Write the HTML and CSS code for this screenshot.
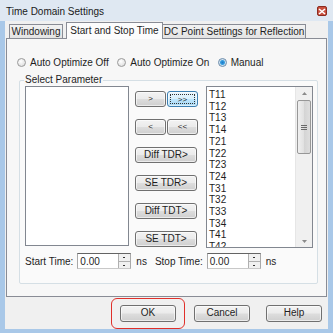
FILE: index.html
```html
<!DOCTYPE html>
<html lang="en">
<head>
  <meta charset="UTF-8" />
  <title>Time Domain Settings</title>
  <link rel="stylesheet" href="styles.css">
</head>
<body>

<div class="window">
  <div class="titlebar">
    <span class="title">Time Domain Settings</span>
    <span class="close">
      <svg width="8" height="7" viewBox="0 0 8 7"><path d="M1 1 L7 6 M7 1 L1 6" stroke="#fff" stroke-width="1.6"/></svg>
    </span>
  </div>

  <div class="client">
    <div class="tabs">
      <div class="tab t-win">Windowing</div>
      <div class="tab active">Start and Stop Time</div>
      <div class="tab t-dc">DC Point Settings for Reflection</div>
    </div>

    <div class="panel">
      <div class="radios">
        <label class="radio"><span class="dot"></span>Auto Optimize Off</label>
        <label class="radio"><span class="dot"></span>Auto Optimize On</label>
        <label class="radio"><span class="dot checked"></span>Manual</label>
      </div>

      <div class="group">
        <span class="legend">Select Parameter</span>
        <div class="lists">
          <div class="listbox source"></div>

          <div class="movers">
            <div class="pair">
              <button class="btn small">&gt;</button>
              <button class="btn small focus"><span>&gt;&gt;</span></button>
            </div>
            <div class="pair">
              <button class="btn small">&lt;</button>
              <button class="btn small">&lt;&lt;</button>
            </div>
            <button class="btn wide">Diff TDR&gt;</button>
            <button class="btn wide">SE TDR&gt;</button>
            <button class="btn wide">Diff TDT&gt;</button>
            <button class="btn wide">SE TDT&gt;</button>
          </div>

          <div class="listbox target">
            <ul class="items">
              <li>T11</li><li>T12</li><li>T13</li><li>T14</li>
              <li>T21</li><li>T22</li><li>T23</li><li>T24</li>
              <li>T31</li><li>T32</li><li>T33</li><li>T34</li>
              <li>T41</li><li>T42</li>
            </ul>
            <div class="scrollbar">
              <div class="arrow">
                <svg width="5" height="3" viewBox="0 0 5 3"><path d="M0 3 L2.5 0 L5 3 Z" fill="#8a8a8a"/></svg>
              </div>
              <div class="track">
                <div class="thumb"><span class="grip"></span></div>
              </div>
              <div class="arrow">
                <svg width="5" height="3" viewBox="0 0 5 3"><path d="M0 0 L2.5 3 L5 0 Z" fill="#8a8a8a"/></svg>
              </div>
            </div>
          </div>
        </div>

        <div class="times">
          <span class="label">Start Time:</span>
          <div class="spin">
            <span class="value">0.00</span>
            <span class="spin-btns"><i class="up"></i><i class="down"></i></span>
          </div>
          <span class="unit">ns</span>
          <span class="label stop">Stop Time:</span>
          <div class="spin">
            <span class="value">0.00</span>
            <span class="spin-btns"><i class="up"></i><i class="down"></i></span>
          </div>
          <span class="unit">ns</span>
        </div>
      </div>
    </div>

    <div class="footer">
      <div class="highlight">
        <button class="btn action">OK</button>
      </div>
      <button class="btn action">Cancel</button>
      <button class="btn action">Help</button>
    </div>
  </div>
</div>

</body>
</html>
```

FILE: styles.css
```css
* {
  box-sizing: border-box;
}
body {
  margin: 0;
  font-family: 'Liberation Sans', Tahoma, sans-serif;
  font-size: 10px;
  color: #1e1e1e;
  background: #a9c8e8;
  white-space: nowrap;
}
.window {
  width: 333px;
  height: 333px;
  display: flex;
  flex-direction: column;
  background: #a9c8e8;
  border-bottom: 4px solid #a9c8e8;
}
.titlebar {
  height: 21px;
  flex: none;
  display: flex;
  align-items: center;
  justify-content: space-between;
  padding: 1px 6px 0 6px;
  background: #dfe8f2;
}
.title {
  color: #1a1a1a;
}
.close {
  width: 10px;
  height: 10px;
  border-radius: 2px;
  background: #c9503f;
  border: 1px solid #8b2b20;
  display: flex;
  align-items: center;
  justify-content: center;
}
.client {
  flex: 1;
  margin: 0 5px;
  background: #f0f0f0;
  display: flex;
  flex-direction: column;
  padding: 0 1px;
}
.tabs {
  height: 17px;
  flex: none;
  display: flex;
  align-items: flex-end;
  padding-left: 3px;
}
.tab {
  height: 14px;
  border: 1px solid #898c95;
  border-bottom: none;
  margin-right: -1px;
  background: linear-gradient(#f2f2f2, #e3e3e3);
  display: flex;
  align-items: center;
  justify-content: center;
  line-height: 1;
}
.t-win {
  width: 54px;
  margin-right: 3px;
}
.t-dc {
  width: 144px;
}
.tab.active {
  width: 97px;
  height: 17px;
  background: #fcfcfc;
  position: relative;
  z-index: 1;
  margin-bottom: -1px;
  padding-bottom: 1px;
}
.panel {
  height: 259px;
  flex: none;
  border: 1px solid #898c95;
  background: #f7f7f7;
  padding: 17px 8px 12px 10px;
  display: flex;
  flex-direction: column;
}
.radios {
  display: flex;
  height: 12px;
  align-items: center;
}
.radio {
  display: flex;
  align-items: center;
  gap: 4px;
  width: 105px;
}
.dot {
  width: 9px;
  height: 9px;
  border-radius: 50%;
  border: 1px solid #9a9a9a;
  background: radial-gradient(circle at 40% 35%, #ffffff, #d6d6d6);
}
.dot.checked {
  background: radial-gradient(circle, #1f78c8 0, #38a0e0 2px, #cfe3f3 3px, #e8e8e8 4px);
  border-color: #6a8bab;
}
.group {
  margin: 12px 0 0 2px;
  flex: 1;
  border: 1px solid #d5dfe5;
  border-radius: 2px;
  background: #fafafa;
  padding: 5px 0 0 5px;
  display: flex;
  flex-direction: column;
  position: relative;
}
.legend {
  position: absolute;
  top: -7px;
  left: 4px;
  padding: 0 1px;
  background: #f7f7f7;
  color: #1e1e1e;
}
.lists {
  display: flex;
  height: 160px;
}
.listbox {
  border: 1px solid #828790;
  background: #fff;
}
.source {
  width: 104px;
}
.movers {
  width: 77px;
  padding: 5px 0 0 6px;
  display: flex;
  flex-direction: column;
  gap: 12px;
}
.pair {
  display: flex;
  gap: 1px;
}
.btn {
  font-family: inherit;
  font-size: 10px;
  color: #1e1e1e;
  border: 1px solid #707070;
  border-radius: 3px;
  background: linear-gradient(#f3f3f3 0%, #ebebeb 48%, #dddddd 52%, #cfcfcf 100%);
  padding: 0;
  height: 16px;
  line-height: 14px;
  box-shadow: inset 0 0 0 1px rgba(255,255,255,0.6);
}
.btn.small {
  width: 31px;
  font-size: 8px;
}
.btn.focus {
  border-color: #3c7fb1;
  background: linear-gradient(#eaf6fd 0%, #d9f0fc 48%, #bee6fd 52%, #a7d9f5 100%);
  padding: 2px;
}
.btn.focus span {
  display: block;
  height: 10px;
  line-height: 9px;
  border: 1px dotted #333;
}
.btn.wide {
  width: 62px;
}
.target {
  width: 107px;
  height: 162px;
  display: flex;
  overflow: hidden;
}
.items {
  list-style: none;
  margin: 0;
  padding: 2px 0 0 2px;
  flex: 1;
  line-height: 11.7px;
}
.scrollbar {
  width: 17px;
  background: #f0f0f0;
  border-left: 1px solid #e6e6e6;
  display: flex;
  flex-direction: column;
}
.arrow {
  height: 12px;
  display: flex;
  align-items: center;
  justify-content: center;
}
.track {
  flex: 1;
}
.thumb {
  margin: 1px 1px 0 1px;
  height: 54px;
  border: 1px solid #979797;
  border-radius: 2px;
  background: linear-gradient(90deg, #f0f0f0, #e0e0e0 50%, #d4d4d4 51%, #dedede);
  display: flex;
  align-items: center;
  justify-content: center;
}
.grip {
  width: 6px;
  height: 5px;
  border-top: 1px solid #6a6a6a;
  border-bottom: 1px solid #6a6a6a;
  position: relative;
}
.grip::after {
  content: "";
  position: absolute;
  left: 0;
  right: 0;
  top: 1px;
  border-top: 1px solid #6a6a6a;
}
.times {
  display: flex;
  align-items: center;
  margin-top: 7px;
  height: 16px;
}
.label {
  margin-right: 4px;
}
.spin {
  width: 54px;
  height: 16px;
  border: 1px solid #7a7a7a;
  border-color: #646464 #a9a9a9 #c8c8c8 #a9a9a9;
  background: #fff;
  display: flex;
  justify-content: space-between;
}
.value {
  padding: 2px 0 0 2px;
  line-height: 12px;
}
.spin-btns {
  width: 12px;
  display: flex;
  flex-direction: column;
  border-left: 1px solid #b0b0b0;
  background: #f0f0f0;
}
.spin-btns i {
  flex: 1;
  position: relative;
}
.spin-btns i.up {
  border-bottom: 1px solid #b0b0b0;
}
.spin-btns i::after {
  content: "";
  position: absolute;
  left: 4px;
  top: 3px;
  width: 2px;
  height: 1px;
  background: #333;
}
.unit {
  margin: 0 8px 0 5px;
}
.footer {
  flex: 1;
  display: flex;
  align-items: center;
  padding: 0 0 0 105px;
  gap: 16px;
}
.highlight {
  border: 1px solid #e0302a;
  border-radius: 6px;
  padding: 6px 8px;
  margin-right: -7px;
}
.btn.action {
  width: 56px;
  height: 17px;
}
```
